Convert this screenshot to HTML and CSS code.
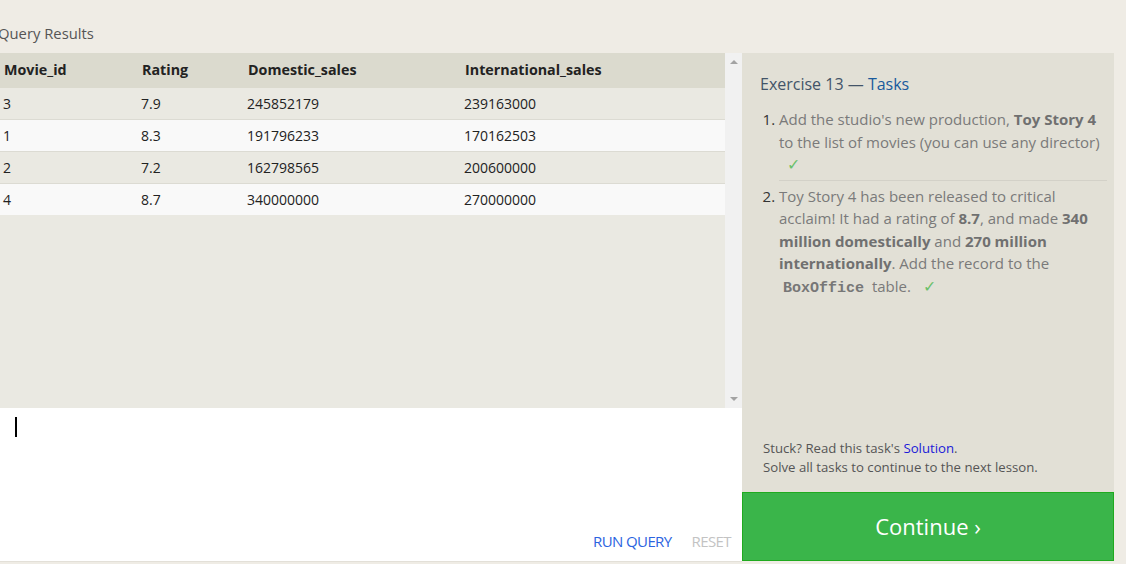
FILE: index.html
```html
<!DOCTYPE html>
<html>
<head>
<meta charset="utf-8">
<link rel="stylesheet" href="styles.css">
</head>
<body>
<div class="main">
  <div class="left">
    <div class="label">Query Results</div>
    <div class="results">
      <div class="table-wrap">
        <table class="grid">
          <colgroup>
            <col class="c1"><col class="c2"><col class="c3"><col class="c4">
          </colgroup>
          <thead>
            <tr><th>Movie_id</th><th>Rating</th><th>Domestic_sales</th><th>International_sales</th></tr>
          </thead>
          <tbody>
            <tr><td>3</td><td>7.9</td><td>245852179</td><td>239163000</td></tr>
            <tr><td>1</td><td>8.3</td><td>191796233</td><td>170162503</td></tr>
            <tr><td>2</td><td>7.2</td><td>162798565</td><td>200600000</td></tr>
            <tr><td>4</td><td>8.7</td><td>340000000</td><td>270000000</td></tr>
          </tbody>
        </table>
      </div>
      <div class="scrollbar">
        <span class="arrow up"></span>
        <span class="arrow down"></span>
      </div>
    </div>
    <div class="editor">
      <div class="cursor"></div>
      <div class="actions">
        <span class="run">RUN QUERY</span>
        <span class="reset">RESET</span>
      </div>
    </div>
  </div>
  <div class="right">
    <div class="panel">
      <div class="title">Exercise 13 — <span class="tasks">Tasks</span></div>
      <ol class="task-list">
        <li>Add the studio's new production, <b>Toy Story 4</b> to the list of movies (you can use any director)<br><span class="check first">✓</span></li>
        <li>Toy Story 4 has been released to critical acclaim! It had a rating of <b>8.7</b>, and made <b>340 million domestically</b> and <b>270 million internationally</b>. Add the record to the <code>BoxOffice</code> table. <span class="check">✓</span></li>
      </ol>
      <div class="help">
        <div>Stuck? Read this task's <span class="link">Solution</span>.</div>
        <div>Solve all tasks to continue to the next lesson.</div>
      </div>
    </div>
    <div class="continue">Continue ›</div>
  </div>
</div>
</body>
</html>
```

FILE: styles.css
```css
html, body {
  margin: 0;
  padding: 0;
}
body {
  background: #efece5;
  font-family: "Open Sans", "Liberation Sans", sans-serif;
  width: 1126px;
  height: 564px;
  overflow: hidden;
}
.main {
  display: flex;
  align-items: flex-start;
}
.left {
  width: 742px;
  display: flex;
  flex-direction: column;
  border-bottom: 1px solid #e3e0d8;
}
.label {
  height: 53px;
  box-sizing: border-box;
  padding-top: 23px;
  margin-left: -2px;
  font-size: 14.8px;
  line-height: 20px;
  color: #555;
}
.results {
  height: 355px;
  display: flex;
  background: #eae9e2;
}
.table-wrap {
  flex: 1;
}
.grid {
  width: 100%;
  border-collapse: collapse;
  table-layout: fixed;
  font-size: 14px;
  color: #222;
}
.c1 { width: 138px; }
.c2 { width: 106px; }
.c3 { width: 217px; }
.grid th {
  background: #dbdace;
  height: 35px;
  box-sizing: border-box;
  text-align: left;
  font-weight: 700;
  font-size: 14.3px;
  line-height: 20px;
  padding: 7px 0 8px 4px;
  color: #222;
}
.grid td {
  height: 31px;
  padding: 0 0 0 3px;
  border-bottom: 1px solid #dcdbd3;
}
.grid tbody tr:nth-child(odd) td { background: #eae9e2; }
.grid tbody tr:nth-child(even) td { background: #f9f9f9; }
.grid tbody tr:last-child td { border-bottom: none; height: 31px; }
.scrollbar {
  width: 17px;
  background: #f1f1f1;
  display: flex;
  flex-direction: column;
  justify-content: space-between;
  align-items: center;
  padding: 7px 0 7px;
  box-sizing: border-box;
}
.arrow {
  width: 0;
  height: 0;
  border-left: 4px solid transparent;
  border-right: 4px solid transparent;
}
.arrow.up { border-bottom: 4px solid #a3a3a3; }
.arrow.down { border-top: 4px solid #a3a3a3; }
.editor {
  height: 153px;
  background: #fff;
  display: flex;
  flex-direction: column;
  justify-content: space-between;
  box-sizing: border-box;
  padding: 9px 11px 10px 15px;
}
.cursor {
  width: 2px;
  height: 20px;
  background: #000;
}
.actions {
  display: flex;
  justify-content: flex-end;
  gap: 20px;
  font-size: 15px;
  line-height: 19px;
  letter-spacing: -0.6px;
}
.run { color: #2b63e0; }
.reset { color: #c3c3c3; }
.right {
  width: 372px;
  margin-top: 53px;
  display: flex;
  flex-direction: column;
}
.panel {
  height: 439px;
  background: #e2e0d6;
  box-sizing: border-box;
  padding: 20px 7px 0 18px;
  display: flex;
  flex-direction: column;
}
.title {
  font-size: 16px;
  line-height: 22px;
  color: #435468;
}
.tasks { color: #195a9c; }
.task-list {
  margin: 13px 0 0;
  padding: 0 0 0 19px;
  font-size: 15px;
  line-height: 22.5px;
  color: #7a7a7a;
}
.task-list li {
  padding-bottom: 4px;
}
.task-list li::marker {
  color: #333;
}
.task-list li + li {
  border-top: 1px solid #d3d1c8;
  padding-top: 4px;
}
.task-list b {
  color: #707070;
}
.task-list code {
  font-family: "Liberation Mono", monospace;
  font-weight: 700;
  font-size: 15px;
  padding: 0 4px;
  color: #777;
}
.check {
  color: #6bc06b;
  margin-left: 8px;
  font-size: 16px;
}
.check.first { margin-left: 8px; }
.help {
  margin-top: auto;
  padding: 0 0 15px 3px;
  font-size: 13.2px;
  line-height: 19px;
  color: #555;
}
.link { color: #1a1ad8; }
.continue {
  height: 69px;
  box-sizing: border-box;
  background: #3ab54a;
  border: 1px solid #1faa1f;
  color: #fff;
  font-size: 22px;
  padding-bottom: 2px;
  display: flex;
  align-items: center;
  justify-content: center;
}
```
